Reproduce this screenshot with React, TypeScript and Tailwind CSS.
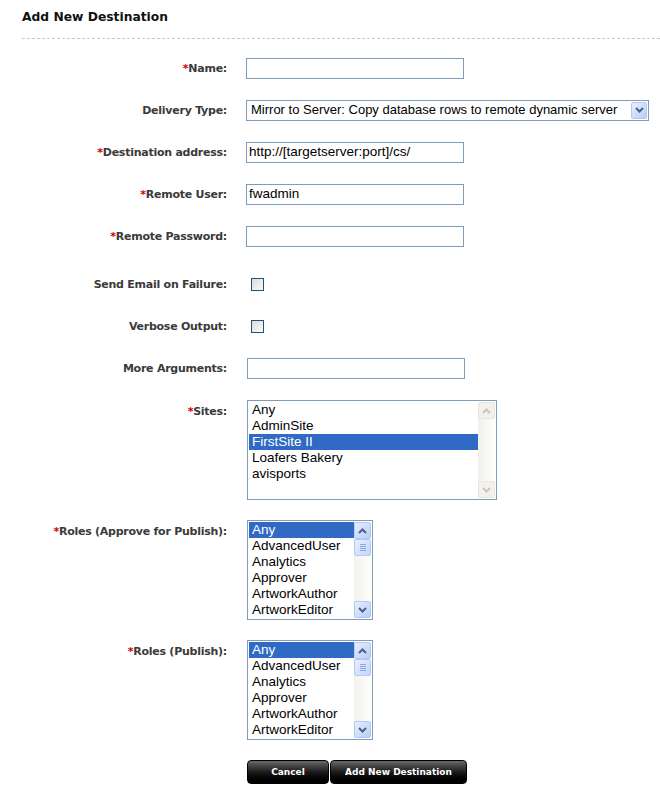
import React from "react";

const labelFont = { fontFamily: '"DejaVu Sans", Verdana, sans-serif' };
const fieldFont = { fontFamily: '"Liberation Sans", Arial, sans-serif' };

function Label({ text, required }: { text: string; required?: boolean }) {
  return (
    <span className="text-[11px] font-bold text-[#3a3a3a] whitespace-nowrap tracking-[-0.25px]" style={labelFont}>
      {required && <span className="text-[#cc0000]">*</span>}
      {text}
    </span>
  );
}

function Row({ label, required, children, h = "h-[42px]" }: { label: string; required?: boolean; children?: React.ReactNode; h?: string }) {
  return (
    <div className={`flex items-center ${h}`}>
      <div className="w-[227px] flex justify-end pt-[2px]">
        <Label text={label} required={required} />
      </div>
      <div className="ml-[19px] flex items-center">{children}</div>
    </div>
  );
}

function TextBox({ value = "", w = "w-[218px]" }: { value?: string; w?: string }) {
  return (
    <div
      className={`${w} h-[21px] border border-[#7f9db9] bg-white flex items-center px-[2px] text-[13.5px] text-black`}
      style={fieldFont}
    >
      {value}
    </div>
  );
}

function CheckBox() {
  return (
    <div className="ml-[5px] w-[13px] h-[13px] border border-[#1c5180] bg-gradient-to-br from-[#dcdcd6] to-[#fbfbf9]" />
  );
}

function Chevron({ up, color }: { up?: boolean; color: string }) {
  return (
    <svg width="9" height="6" viewBox="0 0 9 6">
      <path
        d={up ? "M1 5 L4.5 1.5 L8 5" : "M1 1 L4.5 4.5 L8 1"}
        fill="none"
        stroke={color}
        strokeWidth="2"
      />
    </svg>
  );
}

function ScrollButton({ up, disabled }: { up?: boolean; disabled?: boolean }) {
  return disabled ? (
    <div className="w-[17px] h-[17px] rounded-[2px] border border-[#e8e6dc] bg-[#f2f1ea] flex items-center justify-center">
      <Chevron up={up} color="#c9c7ba" />
    </div>
  ) : (
    <div className="w-[17px] h-[17px] rounded-[2px] border border-[#b4c8f6] bg-gradient-to-br from-[#e8effd] to-[#b8cdf8] flex items-center justify-center">
      <Chevron up={up} color="#4d6185" />
    </div>
  );
}

function ScrollBar({ disabled }: { disabled?: boolean }) {
  return (
    <div className="w-[17px] flex flex-col bg-gradient-to-r from-[#f3f1ec] to-[#fefefb]">
      <ScrollButton up disabled={disabled} />
      {!disabled && (
        <div className="w-[17px] h-[17px] rounded-[2px] border border-[#b4c8f6] bg-gradient-to-br from-[#e8effd] to-[#c3d5fb] flex flex-col items-center justify-center gap-[1px]">
          <div className="w-[6px] h-px bg-[#8ca7e6]" />
          <div className="w-[6px] h-px bg-[#8ca7e6]" />
          <div className="w-[6px] h-px bg-[#8ca7e6]" />
          <div className="w-[6px] h-px bg-[#8ca7e6]" />
        </div>
      )}
      <div className="flex-1" />
      <ScrollButton disabled={disabled} />
    </div>
  );
}

function ListBox({
  items,
  selected,
  w,
  disabledScroll,
}: {
  items: string[];
  selected: number;
  w: string;
  disabledScroll?: boolean;
}) {
  return (
    <div className={`${w} h-[100px] border border-[#7f9db9] bg-white flex p-px`}>
      <div className="flex-1 overflow-hidden text-[13.5px] text-black" style={fieldFont}>
        {items.map((it, i) => (
          <div
            key={it}
            className={`h-[16px] leading-[16px] pl-[3px] whitespace-nowrap ${
              i === selected ? "bg-[#316ac5] text-white" : ""
            }`}
          >
            {it}
          </div>
        ))}
      </div>
      <ScrollBar disabled={disabledScroll} />
    </div>
  );
}

function ListRow({ label, children, mt }: { label: string; children: React.ReactNode; mt: string }) {
  return (
    <div className={`flex items-start ${mt}`}>
      <div className="w-[227px] flex justify-end pt-[4px]">
        <Label text={label} required />
      </div>
      <div className="ml-[20px]">{children}</div>
    </div>
  );
}

function BlackButton({ text, w }: { text: string; w: string }) {
  return (
    <div
      className={`${w} h-[24px] rounded-[4px] bg-gradient-to-b from-[#6a6a6a] via-[#1c1c1c] to-[#000000] border border-[#000] flex items-center justify-center text-white text-[9px] font-bold pt-px`}
      style={labelFont}
    >
      {text}
    </div>
  );
}

const roles = ["Any", "AdvancedUser", "Analytics", "Approver", "ArtworkAuthor", "ArtworkEditor"];

export default function App() {
  return (
    <div className="w-[660px] h-[798px] bg-white overflow-hidden">
      <div className="ml-[22px]">
        <div className="h-[39px] border-b border-dashed border-[#c8c8c8] pt-[8px]">
          <h1 className="text-[12.3px] font-bold text-[#111] leading-[18px]" style={{ fontFamily: '"DejaVu Sans", Tahoma, sans-serif' }}>
            Add New Destination
          </h1>
        </div>
      </div>

      <div className="pt-[8px]">
        <Row label="Name:" required>
          <TextBox />
        </Row>
        <Row label="Delivery Type:">
          <div
            className="w-[403px] h-[21px] border border-[#7f9db9] bg-white flex items-center text-[13px] text-black"
            style={fieldFont}
          >
            <span className="flex-1 pl-[4px] whitespace-nowrap overflow-hidden">
              Mirror to Server: Copy database rows to remote dynamic server
            </span>
            <div className="w-[16px] h-[17px] mr-px rounded-[2px] border border-[#b4c8f6] bg-gradient-to-br from-[#e8effd] to-[#b8cdf8] flex items-center justify-center">
              <Chevron color="#4d6185" />
            </div>
          </div>
        </Row>
        <Row label="Destination address:" required>
          <TextBox value="http://[targetserver:port]/cs/" />
        </Row>
        <Row label="Remote User:" required>
          <TextBox value="fwadmin" />
        </Row>
        <Row label="Remote Password:" required>
          <TextBox />
        </Row>
        <div className="h-[6px]" />
        <Row label="Send Email on Failure:">
          <CheckBox />
        </Row>
        <Row label="Verbose Output:">
          <CheckBox />
        </Row>
        <Row label="More Arguments:">
          <div className="ml-px">
            <TextBox />
          </div>
        </Row>

        <ListRow label="Sites:" mt="mt-[11px]">
          <ListBox
            w="w-[250px]"
            items={["Any", "AdminSite", "FirstSite II", "Loafers Bakery", "avisports"]}
            selected={2}
            disabledScroll
          />
        </ListRow>
        <ListRow label="Roles (Approve for Publish):" mt="mt-[20px]">
          <ListBox w="w-[126px]" items={roles} selected={0} />
        </ListRow>
        <ListRow label="Roles (Publish):" mt="mt-[20px]">
          <ListBox w="w-[126px]" items={roles} selected={0} />
        </ListRow>

        <div className="flex gap-px ml-[247px] mt-[20px]">
          <BlackButton text="Cancel" w="w-[82px]" />
          <BlackButton text="Add New Destination" w="w-[137px]" />
        </div>
      </div>
    </div>
  );
}
